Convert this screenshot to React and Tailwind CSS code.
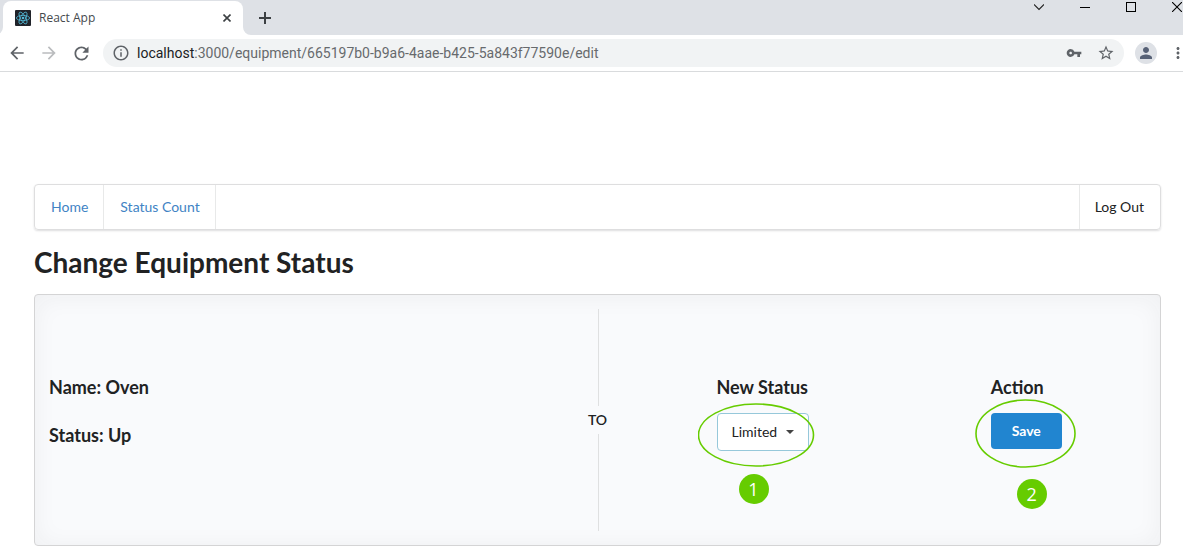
import { useState } from "react";
import {
  MdArrowBack,
  MdArrowForward,
  MdRefresh,
  MdInfoOutline,
  MdVpnKey,
  MdStarBorder,
  MdPerson,
  MdMoreVert,
} from "react-icons/md";

function ReactIcon() {
  return (
    <svg viewBox="0 0 16 16" className="size-4 shrink-0" aria-hidden="true">
      <rect width="16" height="16" rx="1" fill="#20232a" />
      <g fill="none" stroke="#53b9d8" strokeWidth="0.8">
        <ellipse cx="8" cy="8" rx="6.6" ry="2.6" />
        <ellipse cx="8" cy="8" rx="6.6" ry="2.6" transform="rotate(60 8 8)" />
        <ellipse cx="8" cy="8" rx="6.6" ry="2.6" transform="rotate(120 8 8)" />
      </g>
      <circle cx="8" cy="8" r="1.3" fill="#53b9d8" />
    </svg>
  );
}

function TabStrip() {
  return (
    <div className="flex h-[35px] items-start justify-between bg-[#dee1e6]">
      <div className="flex items-end pl-[3px] pt-px">
        <div className="relative flex h-[34px] w-60 items-center rounded-t-lg bg-white pl-3 pr-2.5">
          <svg viewBox="0 0 8 8" className="absolute bottom-0 left-full size-2" aria-hidden="true">
            <path d="M0 0A8 8 0 0 0 8 8H0Z" fill="#fff" />
          </svg>
          <svg viewBox="0 0 8 8" className="absolute bottom-0 right-full size-2" aria-hidden="true">
            <path d="M8 0A8 8 0 0 1 0 8H8Z" fill="#fff" />
          </svg>
          <ReactIcon />
          <span className="ml-2 flex-1 text-xs text-[#45494d]">React App</span>
          <button type="button" aria-label="Close tab" className="p-0.5">
            <svg viewBox="0 0 8 8" className="size-2" stroke="#3c4043" strokeWidth="1.6">
              <path d="M0.5 0.5L7.5 7.5M7.5 0.5L0.5 7.5" />
            </svg>
          </button>
        </div>
        <button type="button" aria-label="New tab" className="ml-4 flex h-[34px] items-center">
          <svg viewBox="0 0 12 12" className="size-3" stroke="#3c4043" strokeWidth="2">
            <path d="M6 0V12M0 6H12" />
          </svg>
        </button>
      </div>
      <div className="flex h-[14px] items-center gap-9 overflow-hidden pr-px">
        <button type="button" aria-label="Search tabs">
          <svg viewBox="0 0 10 10" className="block size-2.5" fill="none" stroke="#222" strokeWidth="1.1">
            <path d="M0 2.5L5 7.5L10 2.5" />
          </svg>
        </button>
        <button type="button" aria-label="Minimize">
          <svg viewBox="0 0 10 10" className="block size-2.5" stroke="#000" strokeWidth="1">
            <path d="M0 5.5H10" />
          </svg>
        </button>
        <button type="button" aria-label="Maximize">
          <svg viewBox="0 0 10 10" className="block size-2.5" fill="none" stroke="#000" strokeWidth="1">
            <rect x="0.5" y="0.5" width="9" height="9" />
          </svg>
        </button>
        <button type="button" aria-label="Close window">
          <svg viewBox="0 0 10 10" className="block size-2.5" stroke="#000" strokeWidth="1.1">
            <path d="M0 0L10 10M10 0L0 10" />
          </svg>
        </button>
      </div>
    </div>
  );
}

function Toolbar() {
  return (
    <div className="flex h-[37px] items-center border-b border-[#d9dbdd] bg-white pl-[7px] text-[#5f6368]">
      <button type="button" aria-label="Back">
        <MdArrowBack className="size-5" />
      </button>
      <button type="button" aria-label="Forward" className="ml-3 text-[#babcbe]">
        <MdArrowForward className="size-5" />
      </button>
      <button type="button" aria-label="Reload" className="ml-3">
        <MdRefresh className="size-[21px]" />
      </button>
      <div className="ml-[11px] flex h-7 flex-1 items-center rounded-full bg-[#f1f3f4] pl-[9px] pr-[9px]">
        <MdInfoOutline className="size-[18px] shrink-0" />
        <p className="ml-[7px] flex-1 font-[Roboto,sans-serif] text-sm text-[#676a6d]">
          <span className="text-[#202124]">localhost</span>
          :3000/equipment/665197b0-b9a6-4aae-b425-5a843f77590e/edit
        </p>
        <button type="button" aria-label="Passwords">
          <MdVpnKey className="size-4" />
        </button>
        <button type="button" aria-label="Bookmark" className="ml-[15px]">
          <MdStarBorder className="size-[18px]" />
        </button>
      </div>
      <button
        type="button"
        aria-label="Profile"
        className="ml-[11px] flex size-[22px] items-center justify-center rounded-full bg-[#dee1e6] text-[#576176]"
      >
        <MdPerson className="size-[18px]" />
      </button>
      <button type="button" aria-label="Menu" className="-mr-1 ml-3">
        <MdMoreVert className="size-[18px]" />
      </button>
    </div>
  );
}

function Badge({ children, className }) {
  return (
    <span
      className={`pointer-events-none absolute flex size-[30px] items-center justify-center rounded-full bg-[#66cc00] font-['Open_Sans',sans-serif] text-lg text-white ${className}`}
    >
      {children}
    </span>
  );
}

export default function App() {
  const [status, setStatus] = useState("Limited");
  return (
    <div className="bg-white">
      <header className="font-['Open_Sans',sans-serif]">
        <TabStrip />
        <Toolbar />
      </header>

      <main className="pb-3.5 pl-[34px] pr-[22px] pt-28 font-[Lato,sans-serif] text-sm text-[#212223]">
        <nav className="flex h-[46px] items-stretch rounded border border-[#dededf] shadow-[0_1px_2px_0_rgba(34,36,38,0.15)]">
          <a href="#home" className="flex items-center border-r border-[#e8e9e9] pl-4 pr-[15px] text-[#4183c4]">
            Home
          </a>
          <a href="#count" className="flex items-center border-r border-[#e8e9e9] pl-4 pr-[15px] text-[#4183c4]">
            Status Count
          </a>
          <a href="#logout" className="ml-auto flex items-center border-l border-[#e8e9e9] pl-[15px] pr-4">
            Log Out
          </a>
        </nav>

        <h1 className="mt-3.5 text-[28px] font-bold leading-9">Change Equipment Status</h1>

        <section className="mt-3.5 rounded border border-[#d4d4d5] bg-[#f9fafc] p-3.5 shadow-[inset_0_2px_25px_0_rgba(34,36,38,0.05)]">
          <div className="flex min-h-[222px]">
            <div className="flex flex-1 flex-col gap-6 pt-[66px] text-lg font-bold leading-6">
              <h3>Name: Oven</h3>
              <h3>Status: Up</h3>
            </div>

            <div className="-mx-3 flex w-6 flex-col items-center">
              <span className="w-0.5 flex-1 border-r border-[#dfe0e1]" />
              <span className="py-1 text-sm font-semibold">TO</span>
              <span className="w-0.5 flex-1 border-r border-[#dfe0e1]" />
            </div>

            <div className="grid flex-1 grid-cols-2 pt-[66px]">
              <div className="pl-[119px]">
                <label htmlFor="status" className="block whitespace-nowrap text-lg font-bold leading-6">
                  New Status
                </label>
                <div className="relative mt-3.5 w-[92px]">
                  <select
                    id="status"
                    value={status}
                    onChange={(e) => setStatus(e.target.value)}
                    className="h-[38px] w-full appearance-none rounded border border-[#96c8da] bg-white pl-3.5"
                  >
                    <option>Up</option>
                    <option>Limited</option>
                    <option>Down</option>
                  </select>
                  <svg
                    viewBox="0 0 8 4"
                    className="pointer-events-none absolute right-[15px] top-[17px] h-1 w-2"
                    aria-hidden="true"
                  >
                    <path d="M0 0H8L4 4Z" fill="#444" />
                  </svg>
                  <svg
                    viewBox="0 0 117 64"
                    className="pointer-events-none absolute -left-[19px] -top-2.5 h-16 w-[117px] max-w-none"
                    aria-hidden="true"
                  >
                    <ellipse cx="58" cy="32" rx="57.5" ry="31" fill="none" stroke="#66cc00" strokeWidth="1.6" />
                  </svg>
                  <Badge className="left-[22px] top-[61px]">1</Badge>
                </div>
              </div>

              <div className="pl-[119px]">
                <h3 className="text-lg font-bold leading-6">Action</h3>
                <div className="relative mt-3.5 w-[71px]">
                  <button type="button" className="h-9 w-full rounded bg-[#2185d0] font-bold text-white">
                    Save
                  </button>
                  <svg
                    viewBox="0 0 101 69"
                    className="pointer-events-none absolute -left-4 -top-3.5 h-[69px] w-[101px] max-w-none"
                    aria-hidden="true"
                  >
                    <ellipse cx="50.5" cy="34.5" rx="49.5" ry="33.5" fill="none" stroke="#66cc00" strokeWidth="1.6" />
                  </svg>
                  <Badge className="left-[26px] top-[66px]">2</Badge>
                </div>
              </div>
            </div>
          </div>
        </section>
      </main>
    </div>
  );
}
